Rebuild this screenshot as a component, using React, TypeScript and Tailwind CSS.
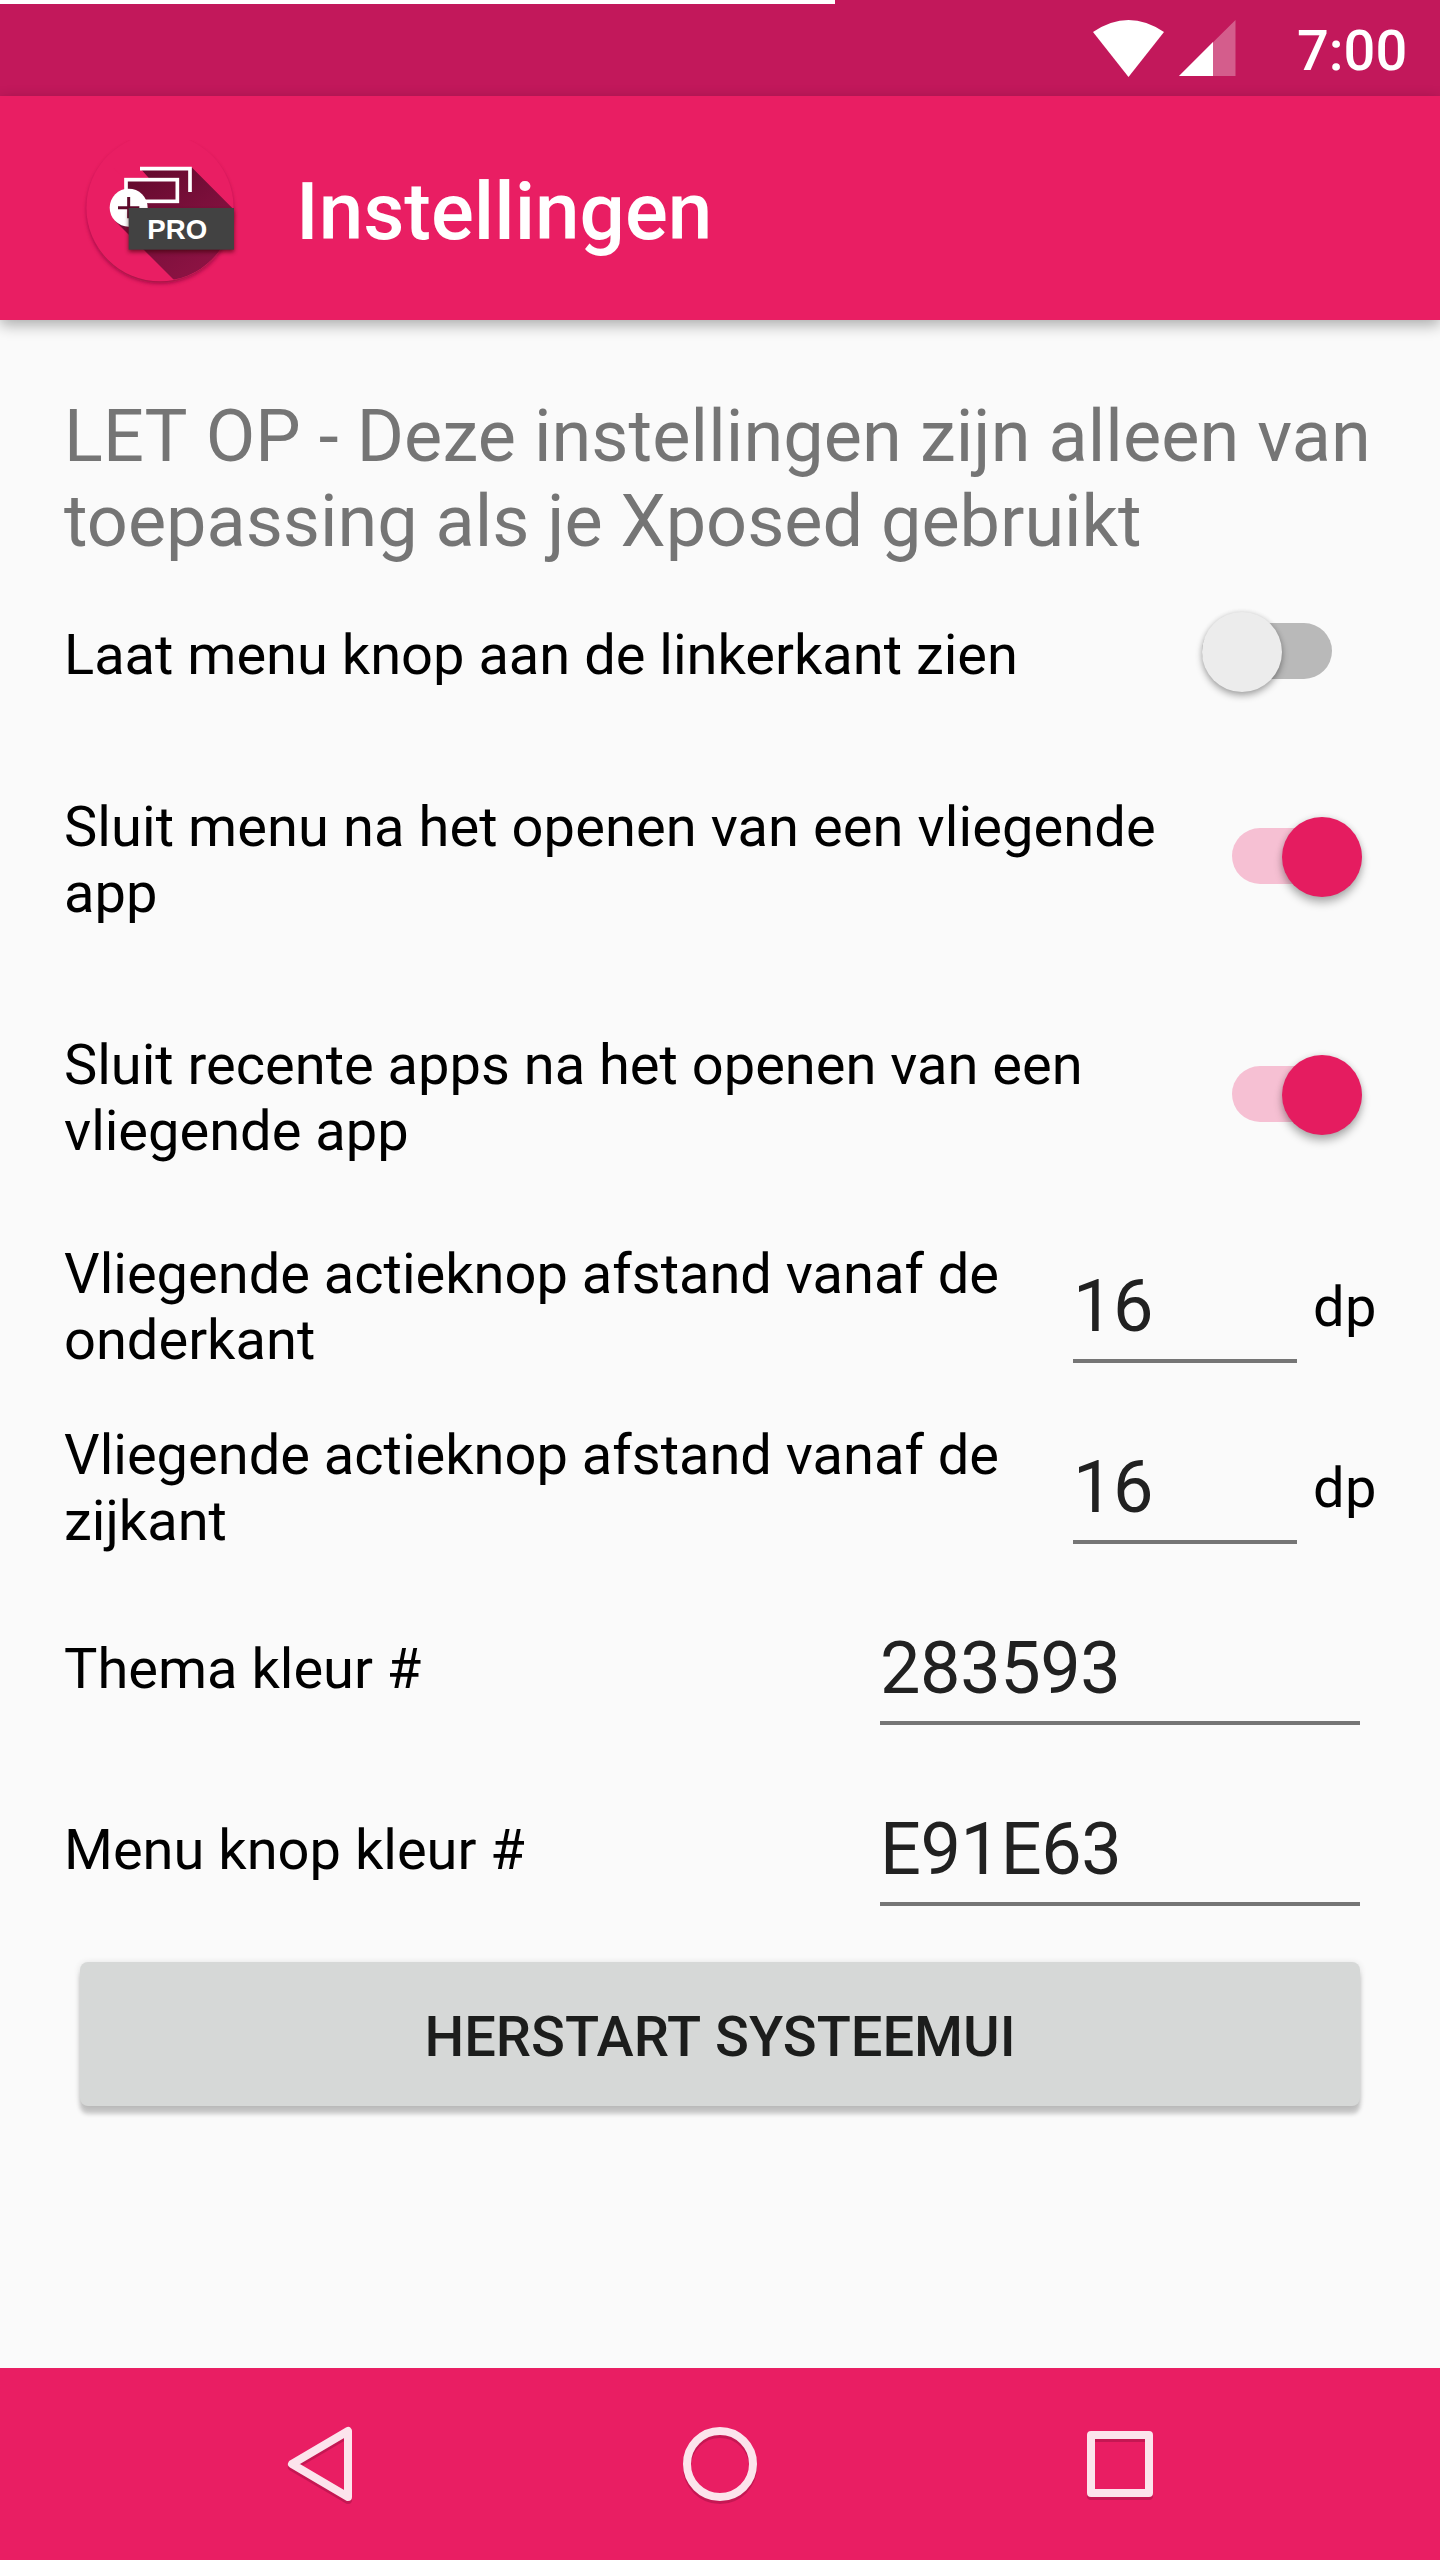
import React from "react";

function AppLogo() {
  return (
    <svg className="w-[200px] h-[160px]" viewBox="0 0 600 480">
      <defs>
        <linearGradient id="long" x1="240" y1="100" x2="450" y2="400" gradientUnits="userSpaceOnUse">
          <stop offset="0" stopColor="#650a2e" />
          <stop offset="0.5" stopColor="#7b0f3b" />
          <stop offset="1" stopColor="#8f1344" />
        </linearGradient>
        <clipPath id="disc"><circle cx="300" cy="203" r="220" /></clipPath>
        <filter id="soft" x="-20%" y="-20%" width="140%" height="140%"><feGaussianBlur stdDeviation="6" /></filter>
      </defs>
      <circle cx="300" cy="211" r="219" fill="#8f0d3d" opacity="0.9" filter="url(#soft)" />
      <circle cx="300" cy="203" r="221" fill="#e91e63" />
      <g clipPath="url(#disc)">
        <path d="M240 88 L395 82 L620 307 V480 H402 L166 244 L200 120 L274 122 Z" fill="url(#long)" />
        <path d="M193 114 L266 114 L240 84 L160 84 Z" fill="#e91e63" />
      </g>
      <path d="M240 86 H390 V156" fill="none" stroke="#fff" strokeWidth="11" />
      <rect x="198" y="119" width="154" height="65" fill="none" stroke="#fff" strokeWidth="11" />
      <circle cx="206" cy="203" r="57" fill="#fff" />
      <path d="M206 171 V235 M174 203 H238" stroke="#5e0a2b" strokeWidth="9" />
      <rect x="206" y="212" width="316" height="124" fill="#300" opacity="0.6" filter="url(#soft)" />
      <rect x="206" y="204" width="316" height="125" fill="#424242" />
      <text x="262" y="298" fontFamily="Liberation Sans, sans-serif" fontWeight="700" fontSize="83" fill="#fff">PRO</text>
    </svg>
  );
}

/* Each word is shaped on its own, so no kerning is applied across spaces. */
function Words({ text }: { text: string }) {
  return (
    <>
      {text.split(" ").map((word, i) => (
        <React.Fragment key={i}>
          {i > 0 && " "}
          <span className="inline-block">{word}</span>
        </React.Fragment>
      ))}
    </>
  );
}

function Toggle({ on }: { on: boolean }) {
  return on ? (
    <div className="mr-[78px] -mt-[6px] flex h-20 w-[130px] items-center justify-end">
      <div className="-mr-20 -mt-[2px] h-14 w-[130px] shrink-0 rounded-full bg-[#f6c0d3]" />
      <div className="relative h-20 w-20 shrink-0 rounded-full bg-[#e51c60] shadow-[0_6px_8px_rgba(0,0,0,0.28),0_0_6px_rgba(0,0,0,0.12)]" />
    </div>
  ) : (
    <div className="mr-[108px] flex h-20 w-[130px] items-center">
      <div className="relative h-20 w-20 shrink-0 rounded-full bg-[#ececec] shadow-[0_4px_7px_rgba(0,0,0,0.3),0_0_5px_rgba(0,0,0,0.12)]" />
      <div className="-ml-20 -mt-[2px] h-14 w-[130px] shrink-0 rounded-full bg-[#b9b9b9]" />
    </div>
  );
}

function Field({ value, className }: { value: string; className: string }) {
  return (
    <div className={"mt-[13px] border-b-4 border-[#757575] pb-[10px] text-[72px] leading-[85px] tracking-[-0.4px] text-[#212121] " + className}>
      {value}
    </div>
  );
}

export default function App() {
  return (
    <div className="flex h-[2560px] w-[1440px] flex-col overflow-hidden bg-[#fafafa] text-[56px] leading-[66px] text-black font-['Roboto',sans-serif]">
      <div className="flex h-24 shrink-0 items-start bg-[#c2185b]">
        <div className="h-1 w-[835px] shrink-0 bg-white" />
        <svg className="ml-[258px] mt-5 h-[57px] w-[143px] shrink-0" viewBox="0 0 143 57">
          <path d="M0 12 Q35.500 -12 71 12 L35.500 57 Z" fill="#fff" />
          <path d="M142.500 0 V56 H86 Z" fill="#fff" opacity="0.3" />
          <path d="M120 22 V56 H86 Z" fill="#fff" />
        </svg>
        <div className="ml-[61px] mt-[18px] font-medium text-white">7:00</div>
      </div>
      <header className="relative z-10 flex h-[224px] shrink-0 items-start bg-[#e91e63] pl-[60px] pt-11 shadow-[0_5px_14px_rgba(0,0,0,0.32)]">
        <AppLogo />
        <h1 className="ml-[36px] mt-[25px] text-[80px] font-medium leading-[94px] text-white">Instellingen</h1>
      </header>
      <main className="flex grow flex-col pl-16">
        <p className="mt-[74px] w-[1330px] text-[72px] leading-[85px] text-[#757575]">
          <span className="tracking-[0.1px]"><Words text="LET OP - Deze instellingen zijn alleen van" /></span>{" "}
          <Words text="toepassing als je Xposed gebruikt" />
        </p>
        <div className="mt-[48px] flex h-20 items-center justify-between">
          <div className="mt-[6px]"><Words text="Laat menu knop aan de linkerkant zien" /></div>
          <Toggle on={false} />
        </div>
        <div className="mt-[102px] flex h-[132px] items-center justify-between">
          <div className="w-[1100px] tracking-[0.08px]"><Words text="Sluit menu na het openen van een vliegende app" /></div>
          <Toggle on />
        </div>
        <div className="mt-[106px] flex h-[132px] items-center justify-between">
          <div className="w-[1100px]"><Words text="Sluit recente apps na het openen van een vliegende app" /></div>
          <Toggle on />
        </div>
        <div className="mt-[77px] flex h-[132px] items-center">
          <div className="w-[1009px]"><Words text="Vliegende actieknop afstand vanaf de onderkant" /></div>
          <Field value="16" className="w-[224px]" />
          <div className="ml-4 tracking-[0.5px]">dp</div>
        </div>
        <div className="mt-[49px] flex h-[132px] items-center">
          <div className="w-[1009px]"><Words text="Vliegende actieknop afstand vanaf de zijkant" /></div>
          <Field value="16" className="w-[224px]" />
          <div className="ml-4 tracking-[0.5px]">dp</div>
        </div>
        <div className="mt-[49px] flex h-[132px] items-center">
          <div className="w-[816px]"><Words text="Thema kleur #" /></div>
          <Field value="283593" className="w-[480px]" />
        </div>
        <div className="mt-[49px] flex h-[132px] items-center">
          <div className="w-[816px]"><Words text="Menu knop kleur #" /></div>
          <Field value="E91E63" className="w-[480px]" />
        </div>
        <button className="ml-4 mt-[46px] h-36 w-[1280px] rounded-lg bg-[#d6d8d7] pt-[6px] font-medium text-[#1c1d1c] shadow-[0_8px_4px_rgba(0,0,0,0.2),0_1px_7px_rgba(0,0,0,0.12)]">
          <Words text="HERSTART SYSTEEMUI" />
        </button>
      </main>
      <nav className="h-48 shrink-0 bg-[#e91e63]">
        <svg className="h-48 w-[1440px]" viewBox="0 0 1440 192" fill="none" stroke="#fce4ec" strokeWidth="8" strokeLinejoin="round">
          <g stroke="#8f0d3d" opacity="0.4" transform="translate(0 3)">
            <path d="M348 63 V129 L292 96 Z" /><circle cx="720" cy="96" r="33" /><rect x="1091" y="67" width="58" height="58" />
          </g>
          <path d="M348 63 V129 L292 96 Z" /><circle cx="720" cy="96" r="33" /><rect x="1091" y="67" width="58" height="58" />
        </svg>
      </nav>
    </div>
  );
}
